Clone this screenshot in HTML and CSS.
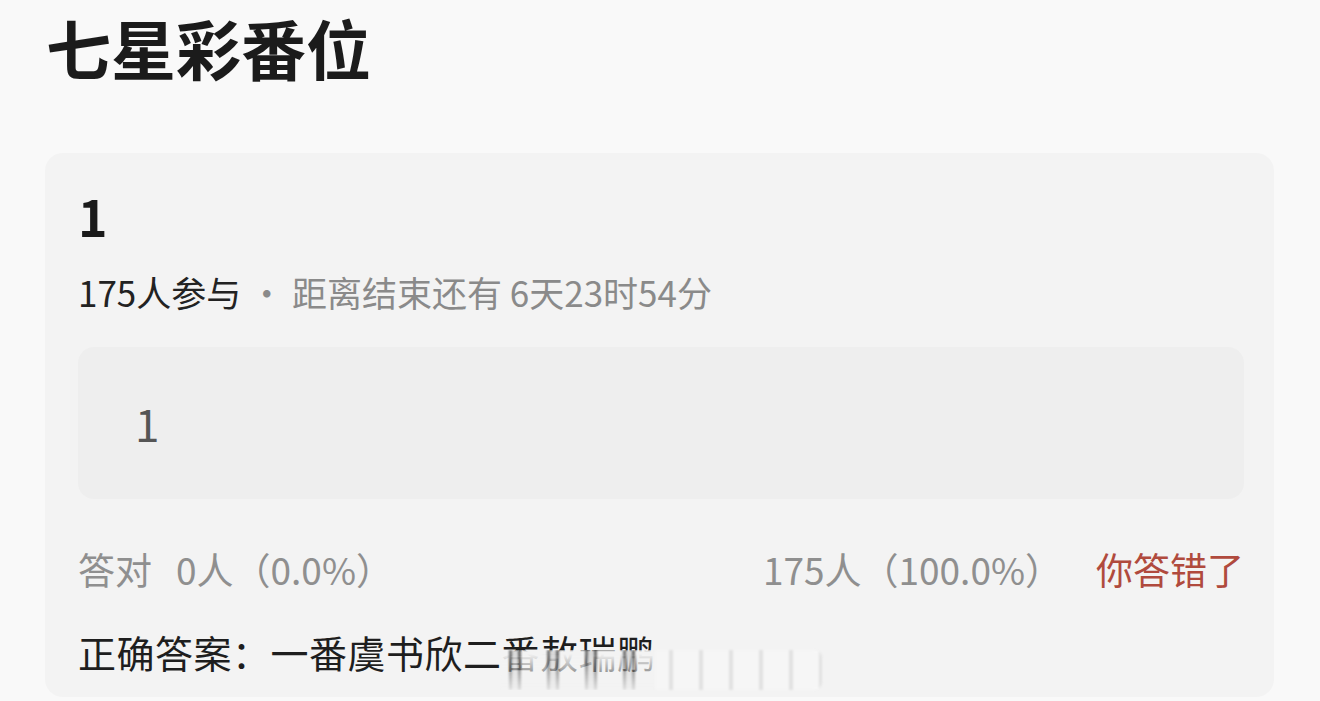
FILE: index.html
```html
<!DOCTYPE html>
<html lang="zh-CN">
<head>
    <meta charset="UTF-8">
    <meta name="viewport" content="width=device-width, initial-scale=1.0">
    <title>七星彩番位</title>
    <link rel="stylesheet" href="styles.css">
</head>
<body>
    <h1 class="title">七星彩番位</h1>

    <div class="card">
        <div class="question">1</div>
        <p class="meta">
            <span class="count">175人参与</span>
            <span class="dot">·</span>
            <span class="remain">距离结束还有 6天23时54分</span>
        </p>

        <div class="option">1</div>

        <div class="stats">
            <span class="right">答对<span class="num">0人（0.0%）</span></span>
            <span class="wrong">175人（100.0%）<em class="result">你答错了</em></span>
        </div>

        <p class="answer">正确答案：一番虞书欣二番敖瑞鹏</p>
        <div class="smear">
            <div class="smear-dark"></div>
            <div class="smear-light"></div>
        </div>
    </div>
</body>
</html>
```

FILE: styles.css
```css
body {
    margin: 0;
    padding: 0 45px;
    background-color: #f9f9f9;
    font-family: "Noto Sans CJK SC", "Noto Sans", sans-serif;
    color: #1e1e1e;
}
.title {
    margin: 0;
    padding: 5px 0 0 1px;
    font-size: 65px;
    line-height: 84px;
    font-weight: 700;
    color: #1b1b1b;
}
.card {
    position: relative;
    margin-top: 64px;
    width: 1229px;
    box-sizing: border-box;
    padding: 32px 30px 20px 33px;
    background-color: #f3f3f3;
    border-radius: 18px;
}
.question {
    font-size: 50px;
    line-height: 60px;
    font-weight: 700;
    color: #1a1a1a;
}
.meta {
    margin: 25px 0 0;
    font-size: 35px;
    line-height: 44px;
}
.count {
    color: #222;
}
.dot,
.remain {
    color: #8a8a8a;
}
.option {
    margin-top: 33px;
    height: 152px;
    padding-left: 57px;
    background-color: #eeeeee;
    border-radius: 16px;
    font-size: 44px;
    line-height: 152px;
    color: #555;
}
.stats {
    display: flex;
    justify-content: space-between;
    margin-top: 44px;
    font-size: 37px;
    line-height: 52px;
    color: #8f8f8f;
}
.num {
    margin-left: 24px;
}
.result {
    font-style: normal;
    margin-left: 34px;
    color: #b04a3d;
}
.answer {
    margin: 32px 0 0;
    font-size: 38px;
    line-height: 50px;
    letter-spacing: 0.5px;
    color: #1e1e1e;
}
/* smeared stamp over the end of the answer line */
.smear {
    position: absolute;
    left: 455px;
    top: 497px;
    display: flex;
    height: 40px;
}
.smear-dark,
.smear-light {
    height: 100%;
    background-color: #f3f3f3;
}
.smear-dark {
    width: 155px;
    background-image: repeating-linear-gradient(90deg,
        rgba(30,30,30,0) 0 9px,
        rgba(30,30,30,0.6) 9px 12px,
        rgba(30,30,30,0.12) 12px 18px,
        rgba(30,30,30,0.65) 18px 21px,
        rgba(30,30,30,0) 21px 38px);
    -webkit-mask-image: linear-gradient(to bottom, #000 10%, rgba(0,0,0,0.15));
    mask-image: linear-gradient(to bottom, #000 10%, rgba(0,0,0,0.15));
    filter: blur(0.8px);
}
.smear-light {
    width: 167px;
    border-radius: 0 8px 8px 0;
    background-color: #f6f6f6;
    background-image: repeating-linear-gradient(90deg,
        rgba(120,120,120,0) 0 14px,
        rgba(120,120,120,0.16) 14px 18px,
        rgba(120,120,120,0) 18px 30px);
    filter: blur(0.8px);
}
```
